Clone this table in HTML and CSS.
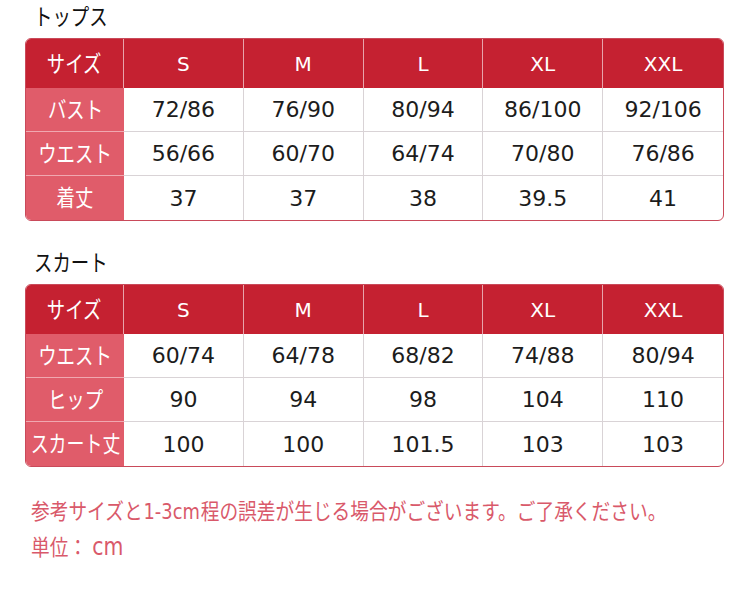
FILE: index.html
```html
<!DOCTYPE html>
<html lang="ja">
<head>
<meta charset="utf-8">
<link rel="stylesheet" href="styles.css">
</head>
<body>
<div class="page">
  <h2 class="title"><span class="jp">トップス</span></h2>
  <div class="chart">
    <div class="cell head label"><span class="jp">サイズ</span></div>
    <div class="cell head">S</div>
    <div class="cell head">M</div>
    <div class="cell head">L</div>
    <div class="cell head">XL</div>
    <div class="cell head last">XXL</div>

    <div class="cell label"><span class="jp">バスト</span></div>
    <div class="cell">72/86</div>
    <div class="cell">76/90</div>
    <div class="cell">80/94</div>
    <div class="cell">86/100</div>
    <div class="cell last">92/106</div>

    <div class="cell label"><span class="jp">ウエスト</span></div>
    <div class="cell">56/66</div>
    <div class="cell">60/70</div>
    <div class="cell">64/74</div>
    <div class="cell">70/80</div>
    <div class="cell last">76/86</div>

    <div class="cell label bottom"><span class="jp">着丈</span></div>
    <div class="cell bottom">37</div>
    <div class="cell bottom">37</div>
    <div class="cell bottom">38</div>
    <div class="cell bottom">39.5</div>
    <div class="cell bottom last">41</div>
  </div>

  <h2 class="title second"><span class="jp">スカート</span></h2>
  <div class="chart">
    <div class="cell head label"><span class="jp">サイズ</span></div>
    <div class="cell head">S</div>
    <div class="cell head">M</div>
    <div class="cell head">L</div>
    <div class="cell head">XL</div>
    <div class="cell head last">XXL</div>

    <div class="cell label"><span class="jp">ウエスト</span></div>
    <div class="cell">60/74</div>
    <div class="cell">64/78</div>
    <div class="cell">68/82</div>
    <div class="cell">74/88</div>
    <div class="cell last">80/94</div>

    <div class="cell label"><span class="jp">ヒップ</span></div>
    <div class="cell">90</div>
    <div class="cell">94</div>
    <div class="cell">98</div>
    <div class="cell">104</div>
    <div class="cell last">110</div>

    <div class="cell label bottom"><span class="jp narrow">スカート丈</span></div>
    <div class="cell bottom">100</div>
    <div class="cell bottom">100</div>
    <div class="cell bottom">101.5</div>
    <div class="cell bottom">103</div>
    <div class="cell bottom last">103</div>
  </div>

  <p class="note"><span class="squeeze">参考サイズと<span class="lat">1-3cm</span>程の誤差が生じる場合がございます。ご了承ください。</span></p>
  <p class="note"><span class="squeeze">単位：<span class="lat big">cm</span></span></p>
</div>
</body>
</html>
```

FILE: styles.css
```css
html, body {
  margin: 0;
  padding: 0;
  background: #ffffff;
}

body {
  font-family: "DejaVu Sans", "Noto Sans CJK JP", sans-serif;
  color: #1a1a1a;
}

.page {
  padding: 0 25px;
  width: 700px;
}

.jp {
  display: inline-block;
  font-family: "Noto Sans CJK JP", sans-serif;
  font-size: 23px;
  line-height: 1.2;
  transform: translateY(-1px) scaleX(0.8);
  white-space: nowrap;
}

.jp.narrow {
  transform: translateY(-1px) scaleX(0.78);
}

.title {
  margin: 0;
  height: 30px;
  display: flex;
  align-items: center;
  font-weight: normal;
  color: #111;
  padding-left: 9px;
}

.title .jp {
  line-height: 1;
  transform-origin: left center;
  transform: scaleX(0.8);
}

.title.second {
  margin-top: 25px;
}

.chart {
  margin-top: 8px;
  display: grid;
  grid-template-columns: 98px repeat(5, 1fr);
  grid-template-rows: 49px repeat(3, 44px);
  width: 697px;
  border: 1px solid #c94a5a;
  border-radius: 6px;
  overflow: hidden;
}

.cell {
  display: flex;
  align-items: center;
  justify-content: center;
  font-size: 22px;
  color: #1c1c1c;
  border-right: 1px solid #d9d3d6;
  border-bottom: 1px solid #d9d3d6;
  white-space: nowrap;
}

.cell.last {
  border-right: none;
}

.cell.bottom {
  border-bottom: none;
}

.cell.head {
  background: #c52131;
  color: #ffffff;
  font-size: 20px;
  border-right: 1px solid #e8a4ab;
  border-bottom: none;
}

.cell.head.last {
  border-right: none;
}

.cell.label {
  background: #e05c6a;
  color: #ffffff;
  border-right: none;
  border-bottom: 1px solid #f0a8b0;
}

.cell.label.head {
  background: #c52131;
  border-right: 1px solid #e8a4ab;
  border-bottom: none;
}

.cell.label.bottom {
  border-bottom: none;
}

.note {
  margin: 0;
  height: 36px;
  display: flex;
  align-items: center;
  font-size: 22px;
  color: #d9596a;
  padding-left: 6px;
}

.note:first-of-type {
  margin-top: 27px;
}

.squeeze {
  display: inline-block;
  font-family: "Noto Sans CJK JP", sans-serif;
  line-height: 1.2;
  transform: translateY(-1px) scaleX(0.85);
  transform-origin: left center;
  white-space: nowrap;
}

.lat {
  font-family: "DejaVu Sans", sans-serif;
  font-size: 21px;
  margin: 0 1px;
}

.lat.big {
  font-size: 24px;
  margin-left: 6px;
}
```
